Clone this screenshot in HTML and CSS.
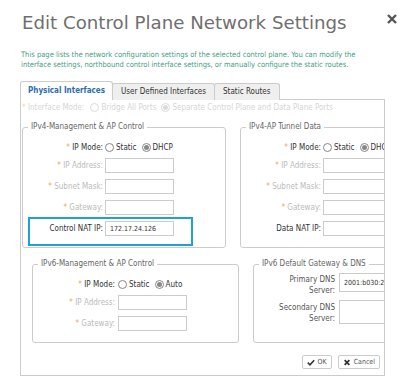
FILE: index.html
```html
<!DOCTYPE html>
<html lang="en">
<head>
  <meta charset="UTF-8" />
  <title>Edit Control Plane Network Settings</title>
  <link rel="stylesheet" href="styles.css">
</head>
<body>
  <div class="dialog-head">
    <h1 class="title">Edit Control Plane Network Settings</h1>
    <svg class="close" viewBox="0 0 12 12"><path d="M2 2l8 8M10 2l-8 8"/></svg>
  </div>
  <p class="intro">This page lists the network configuration settings of the selected control plane. You can modify the<br>interface settings, northbound control interface settings, or manually configure the static routes.</p>

  <div class="tabs">
    <div class="tab active">Physical Interfaces</div>
    <div class="tab">User Defined Interfaces</div>
    <div class="tab">Static Routes</div>
  </div>

  <div class="panel">
    <div class="mode-row">
      <span class="mode-label">Interface Mode:</span>
      <span class="radio"></span><span class="opt">Bridge All Ports</span>
      <span class="radio on"></span><span class="opt">Separate Control Plane and Data Plane Ports</span>
    </div>

    <div class="group-row">
      <fieldset class="group">
        <legend>IPv4-Management &amp; AP Control</legend>
        <div class="field field-mode">
          <span class="field-label req dark">IP Mode:</span>
          <span class="radio"></span><span class="opt">Static</span>
          <span class="radio on"></span><span class="opt">DHCP</span>
        </div>
        <div class="field field-first">
          <span class="field-label req">IP Address:</span>
          <input type="text" />
        </div>
        <div class="field">
          <span class="field-label req">Subnet Mask:</span>
          <input type="text" />
        </div>
        <div class="field">
          <span class="field-label req">Gateway:</span>
          <input type="text" />
        </div>
        <div class="field">
          <span class="field-label dark">Control NAT IP:</span>
          <input type="text" value="172.17.24.126" />
        </div>
        <div class="highlight"></div>
      </fieldset>

      <fieldset class="group">
        <legend>IPv4-AP Tunnel Data</legend>
        <div class="field field-mode">
          <span class="field-label req dark">IP Mode:</span>
          <span class="radio"></span><span class="opt">Static</span>
          <span class="radio on"></span><span class="opt">DHCP</span>
        </div>
        <div class="field field-first">
          <span class="field-label req">IP Address:</span>
          <input type="text" />
        </div>
        <div class="field">
          <span class="field-label req">Subnet Mask:</span>
          <input type="text" />
        </div>
        <div class="field">
          <span class="field-label req">Gateway:</span>
          <input type="text" />
        </div>
        <div class="field">
          <span class="field-label dark">Data NAT IP:</span>
          <input type="text" />
        </div>
      </fieldset>
    </div>

    <div class="group-row lower">
      <fieldset class="group wide">
        <legend>IPv6-Management &amp; AP Control</legend>
        <div class="field field-mode">
          <span class="field-label req dark">IP Mode:</span>
          <span class="radio"></span><span class="opt">Static</span>
          <span class="radio on"></span><span class="opt">Auto</span>
        </div>
        <div class="field field-first">
          <span class="field-label req">IP Address:</span>
          <input type="text" />
        </div>
        <div class="field">
          <span class="field-label req">Gateway:</span>
          <input type="text" />
        </div>
      </fieldset>

      <fieldset class="group wide dns">
        <legend>IPv6 Default Gateway &amp; DNS</legend>
        <div class="dns-row primary">
          <span class="dns-label">Primary DNS<br>Server:</span>
          <input type="text" value="2001:b030:2516::1" />
        </div>
        <div class="dns-row secondary">
          <span class="dns-label">Secondary DNS<br>Server:</span>
          <input type="text" />
        </div>
      </fieldset>
    </div>

    <div class="actions">
      <button class="btn">
        <svg viewBox="0 0 10 8"><path d="M1 4.2l2.7 2.6L9 1.2"/></svg>
        OK
      </button>
      <button class="btn">
        <svg viewBox="0 0 8 8"><path d="M1.3 1.3l5.4 5.4M6.7 1.3L1.3 6.7"/></svg>
        Cancel
      </button>
    </div>
  </div>
</body>
</html>
```

FILE: styles.css
```css
:root {
  --border: #cccccc;
  --muted: #bbbbbb;
  --text: #333333;
  --orange: #f0a34c;
  --blue: #1f9fdc;
}
* {
  margin: 0;
  padding: 0;
  box-sizing: border-box;
}
body {
  width: 400px;
  height: 391px;
  overflow: hidden;
  background: #fff;
  font-family: "DejaVu Sans Condensed", "DejaVu Sans", sans-serif;
  font-size: 8px;
  color: var(--text);
}
.dialog-head {
  display: flex;
  justify-content: space-between;
  align-items: flex-start;
  padding: 12px 2px 0 22px;
}
.title {
  font-family: "DejaVu Sans", sans-serif;
  font-weight: normal;
  font-size: 18.2px;
  line-height: 22px;
  color: #6f6f6f;
}
.close {
  width: 12px;
  height: 12px;
  margin-top: 1px;
  fill: none;
  stroke: #555;
  stroke-width: 2.4;
}
.intro {
  margin: 16px 0 0 21px;
  font-size: 7.5px;
  line-height: 10px;
  color: #45a086;
}
.tabs {
  display: flex;
  align-items: flex-end;
  margin: 11px 0 -1px 20px;
  height: 19px;
  position: relative;
  z-index: 1;
}
.tab {
  height: 17px;
  line-height: 16px;
  padding: 0 8px;
  border: 1px solid var(--border);
  border-bottom: none;
  border-radius: 3px 3px 0 0;
  background: #efefef;
  margin-right: -1px;
}
.tab.active {
  height: 19px;
  line-height: 18px;
  padding: 0 7px;
  background: #fff;
  color: #2c6cb0;
  font-weight: bold;
}
.panel {
  margin-left: 20px;
  width: 365px;
  height: 277px;
  border: 1px solid var(--border);
  overflow: hidden;
}
.mode-row {
  display: flex;
  align-items: center;
  height: 14px;
  padding-left: 1px;
  color: #d6d6d6;
  white-space: nowrap;
}
.mode-label::before {
  content: "* ";
  color: #f8d3aa;
}
.mode-label {
  margin-right: 6px;
}
.mode-row .radio {
  border-color: #dcdcdc;
}
.mode-row .radio.on::after {
  background: #dcdcdc;
}
.group-row {
  display: flex;
  gap: 14px;
  margin-top: 8px;
  padding-left: 1px;
}
.group-row.lower {
  padding-left: 11px;
  margin-top: 11px;
}
.group {
  position: relative;
  flex: none;
  width: 204px;
  min-width: 0;
  border: 1px solid var(--border);
  border-radius: 3px;
  padding: 0 0 11px;
}
.group.wide {
  width: 207px;
}
.group legend {
  margin-left: 5px;
  padding: 0 3px;
  line-height: 10px;
  color: #666;
  white-space: nowrap;
}
.field {
  display: flex;
  align-items: center;
  height: 15px;
  margin-top: 6px;
  white-space: nowrap;
}
.field-mode {
  margin-top: 8px;
}
.field.field-first {
  margin-top: 3px;
}
.field-label {
  flex: none;
  width: 80px;
  margin-right: 2px;
  text-align: right;
  color: var(--muted);
}
.wide .field-label {
  width: 82px;
  margin-right: 3px;
}
.field-label.dark {
  color: var(--text);
}
.req::before {
  content: "* ";
  color: var(--orange);
}
.field input,
.dns-row input {
  flex: none;
  width: 69px;
  height: 15px;
  border: 1px solid var(--border);
  font: inherit;
  font-size: 7px;
  color: var(--text);
  padding: 0 4px;
  outline: none;
}
.radio {
  flex: none;
  display: inline-flex;
  align-items: center;
  justify-content: center;
  width: 9px;
  height: 9px;
  border: 1px solid #888;
  border-radius: 50%;
  margin-right: 2px;
}
.radio.on::after {
  content: "";
  width: 5px;
  height: 5px;
  border-radius: 50%;
  background: #888;
}
.opt {
  margin-right: 5px;
}
.highlight {
  position: absolute;
  left: 5px;
  top: 85px;
  width: 165px;
  height: 29px;
  border: 2px solid var(--blue);
  pointer-events: none;
}
.dns {
  padding-bottom: 15px;
}
.dns-row {
  display: flex;
  white-space: nowrap;
}
.dns-row.primary {
  align-items: flex-start;
  margin-top: 4px;
}
.dns-row.secondary {
  align-items: flex-end;
  margin-top: 4px;
}
.dns-label {
  flex: none;
  width: 81px;
  margin-right: 4px;
  padding-top: 1px;
  text-align: right;
  line-height: 11px;
  color: #555;
}
.dns-row input {
  width: 80px;
}
.primary input {
  height: 19px;
}
.secondary input {
  height: 24px;
}
.actions {
  display: flex;
  justify-content: flex-end;
  gap: 6px;
  margin-top: 12px;
  padding-right: 4px;
}
.btn {
  display: inline-flex;
  align-items: center;
  gap: 3px;
  height: 14px;
  padding: 0 4px;
  border: 1px solid var(--border);
  border-radius: 2px;
  background: #fff;
  font: inherit;
  font-size: 7px;
  color: #555;
}
.btn svg {
  width: 8px;
  height: 7px;
  fill: none;
  stroke: #333;
  stroke-width: 2;
}
```
